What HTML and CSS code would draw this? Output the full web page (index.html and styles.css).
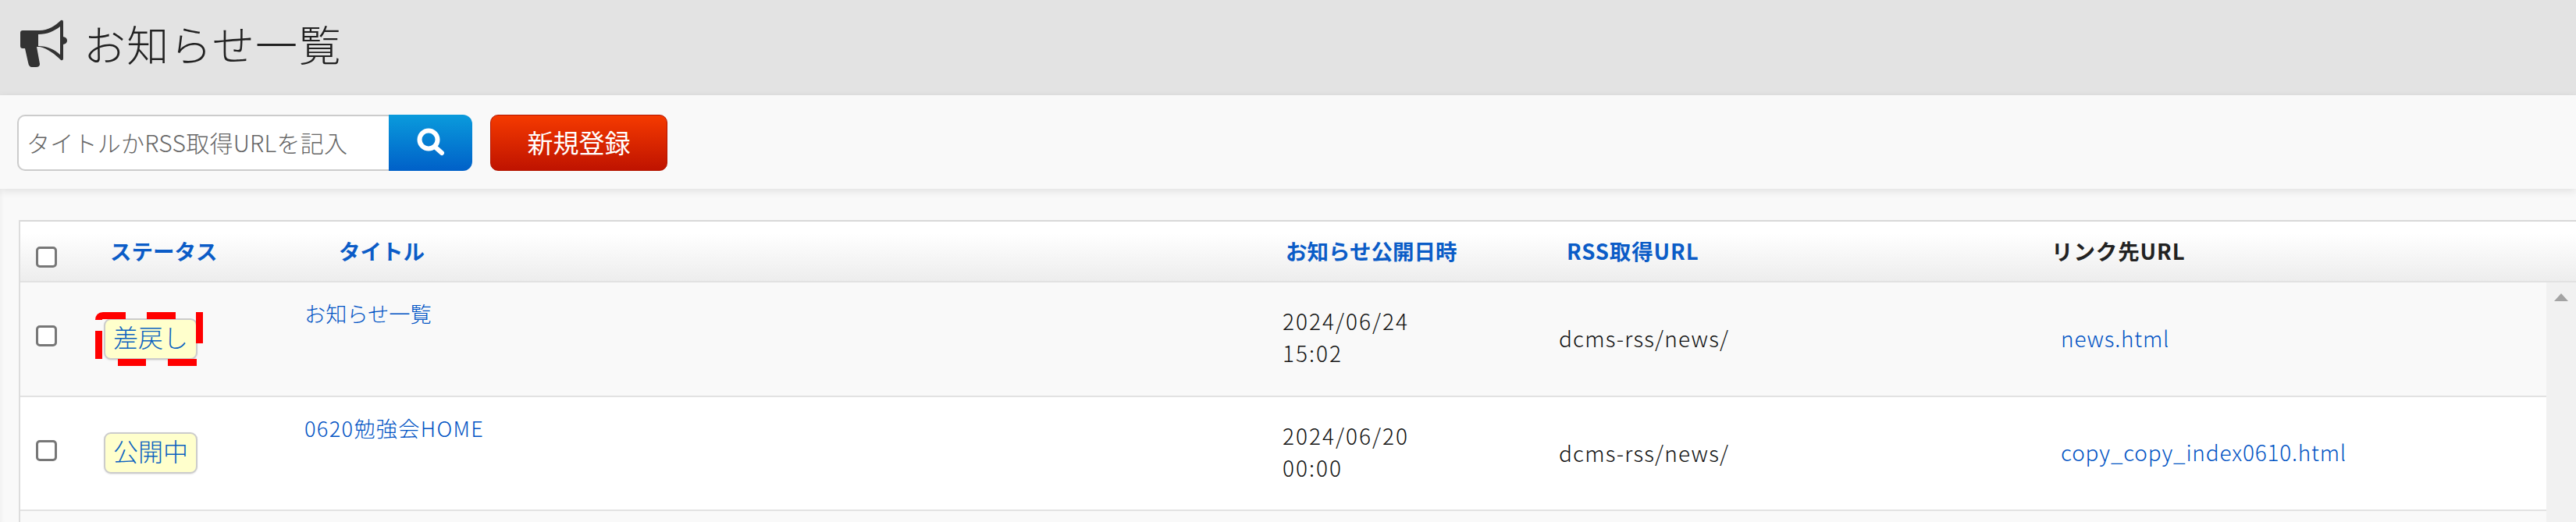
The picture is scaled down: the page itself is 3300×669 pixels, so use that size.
FILE: index.html
```html
<!DOCTYPE html>
<html lang="ja">
<head>
<meta charset="utf-8">
<title>お知らせ一覧</title>
<link rel="stylesheet" href="styles.css">
</head>
<body>
<div class="page">
  <header class="page-head">
    <svg class="mega" viewBox="0 0 61 62"><path fill-rule="evenodd" d="M3 14H25C35 14 45 8 52 1Q55 0 55 3V22Q60 23 60 27Q60 31 55 32V50Q55 53 52 52C45 45 35 37 25 35L21 35L25 57Q25 61 20 61H15Q11 61 10 55L6 37H3Q0 37 0 34V17Q0 14 3 14ZM23 19V34C35 34 43 38 51 45V9C43 15 35 19 23 19Z"/></svg>
    <h1 class="page-title">お知らせ一覧</h1>
  </header>
  <div class="toolbar">
    <form class="search">
      <input class="search-input" type="text" placeholder="タイトルかRSS取得URLを記入">
      <button class="search-btn" type="button" aria-label="検索">
        <svg viewBox="0 0 44 44" class="search-icon"><circle cx="19" cy="18" r="11.5"/><path d="M27 27L36 35"/></svg>
      </button>
    </form>
    <button class="new-btn" type="button">新規登録</button>
  </div>
  <section class="list">
    <div class="list-head">
      <span class="head-check"><input class="check" type="checkbox"></span>
      <a class="head-link">ステータス</a>
      <a class="head-link">タイトル</a>
      <a class="head-link">お知らせ公開日時</a>
      <a class="head-link head-latin">RSS取得URL</a>
      <span class="head-plain head-latin">リンク先URL</span>
    </div>
    <div class="list-body">
      <div class="rows">
        <div class="row row-odd">
          <div class="cell-check"><input class="check" type="checkbox"></div>
          <div class="cell-status">
            <span class="badge">差戻し
              <svg class="dash" viewBox="0 0 138 69"><path d="M4.5 10Q4.5 4.5 10 4.5H39M66 4.5H103M133.5 0V40M4.5 24V60M29 64.5H65M93 64.5H130"/></svg>
            </span>
          </div>
          <div class="cell-title"><a class="link">お知らせ一覧</a></div>
          <div class="cell-date">2024/06/24<br>15:02</div>
          <div class="cell-rss">dcms-rss/news/</div>
          <div class="cell-url"><a class="link">news.html</a></div>
        </div>
        <div class="row">
          <div class="cell-check"><input class="check" type="checkbox"></div>
          <div class="cell-status"><span class="badge">公開中</span></div>
          <div class="cell-title"><a class="link link-wide">0620勉強会HOME</a></div>
          <div class="cell-date">2024/06/20<br>00:00</div>
          <div class="cell-rss">dcms-rss/news/</div>
          <div class="cell-url"><a class="link">copy_copy_index0610.html</a></div>
        </div>
        <div class="row row-odd"></div>
      </div>
      <aside class="scrollbar"><span class="scroll-up"></span></aside>
    </div>
  </section>
</div>
</body>
</html>
```

FILE: styles.css
```css
* { box-sizing: border-box; }
html, body { margin: 0; height: 669px; overflow: hidden; }
body {
  font-family: "Noto Sans CJK JP", "Noto Sans", sans-serif;
  background: #f9f9f9;
  color: #111;
}
.page { height: 669px; overflow: hidden; box-shadow: inset 5px 0 5px -3px rgba(0,0,0,.04); }
.page-head {
  height: 122px;
  background: #e3e3e3;
  display: flex;
  align-items: center;
  padding: 0 0 10px 26px;
}
.mega { width: 61px; height: 62px; fill: #333; flex: none; }
.page-title {
  margin: 0 0 0 20px;
  font-size: 54px;
  font-weight: 300;
  line-height: 1;
  color: #222;
  letter-spacing: 1.3px;
}
.toolbar {
  height: 120px;
  background: #f9f9f9;
  display: flex;
  align-items: flex-start;
  padding: 25px 0 0 22px;
  box-shadow: 0 3px 10px rgba(0,0,0,.1);
  position: relative;
}
.search { display: flex; margin: 0; }
.search-input {
  width: 476px;
  height: 72px;
  border: 2px solid #ccc;
  border-right: 0;
  border-radius: 10px 0 0 10px;
  background: #fff;
  padding: 0 0 2px 10px;
  font: 300 30px "Noto Sans CJK JP", sans-serif;
  letter-spacing: .25px;
  outline: none;
}
.search-input::placeholder { color: #666; opacity: 1; }
.search-btn {
  width: 107px;
  height: 72px;
  border: 0;
  padding: 0;
  border-radius: 0 12px 12px 0;
  background: linear-gradient(#0a9bdc, #0060c8);
  display: flex;
  align-items: center;
  justify-content: center;
}
.search-icon { width: 44px; height: 44px; fill: none; stroke: #fff; stroke-width: 6; stroke-linecap: round; }
.new-btn {
  margin-left: 23px;
  width: 227px;
  height: 72px;
  border: 1px solid #b31500;
  border-radius: 10px;
  background: linear-gradient(#f53a00, #bf1300);
  color: #fff;
  font: 400 33px "Noto Sans CJK JP", sans-serif;
  padding: 0 0 2px;
}
.list {
  margin: 40px 0 0 24px;
  border-left: 2px solid #ddd;
}
.list-head {
  height: 80px;
  border-top: 2px solid #d8d8d8;
  border-bottom: 2px solid #e2e2e2;
  background: linear-gradient(#fff 20%, #ededed);
  display: grid;
  grid-template-columns: 115px 293px 1213px 360px 621px 1fr;
  align-items: center;
  font-size: 27.5px;
  font-weight: 700;
  line-height: 1;
}
.head-check { padding: 14px 0 0 20px; line-height: 0; }
.head-link { color: #0b5cc7; }
.head-plain { color: #222; }
.head-latin { letter-spacing: .9px; }
.check {
  appearance: none;
  width: 27px;
  height: 27px;
  margin: 0;
  border: 3px solid #777;
  border-radius: 5px;
  background: #fff;
  display: block;
}
.list-body { display: flex; }
.rows { flex: 1; }
.row {
  height: 146.5px;
  display: grid;
  grid-template-columns: 100px 264px 1253px 354px 643px 1fr;
  align-items: center;
  border-bottom: 2px solid #e2e2e2;
  background: #fff;
  font-size: 28px;
  font-weight: 300;
}
.row-odd { background: #f9f9f9; }
.cell-check { padding: 0 0 7px 20px; }
.cell-status { padding-left: 7px; }
.cell-title { align-self: start; padding-top: 20px; line-height: 1.4; font-size: 27.2px; }
.cell-date { line-height: 41px; letter-spacing: 2px; padding-bottom: 4px; }
.cell-rss { letter-spacing: 1.15px; padding-bottom: 2px; }
.cell-url { letter-spacing: .8px; padding-bottom: 3px; }
.link { color: #0053c4; }
.link-wide { letter-spacing: 1.3px; }
.badge {
  position: relative;
  display: block;
  width: 120px;
  height: 53px;
  border: 2px solid #ccc;
  border-radius: 9px;
  background: #ffc;
  color: #0a62c0;
  font-size: 32px;
  line-height: 42px;
  text-align: center;
  box-shadow: 0 1px 2px rgba(0,0,0,.1);
}
.dash {
  position: absolute;
  left: -13px;
  top: -10px;
  width: 138px;
  height: 69px;
  fill: none;
  stroke: #f00;
  stroke-width: 9;
}
.scrollbar { width: 38px; background: #f1f1f1; height: 320px; padding: 14px 0 0 10px; }
.scroll-up {
  display: block;
  width: 0;
  height: 0;
  border-left: 9px solid transparent;
  border-right: 9px solid transparent;
  border-bottom: 10px solid #a3a3a3;
}
```
